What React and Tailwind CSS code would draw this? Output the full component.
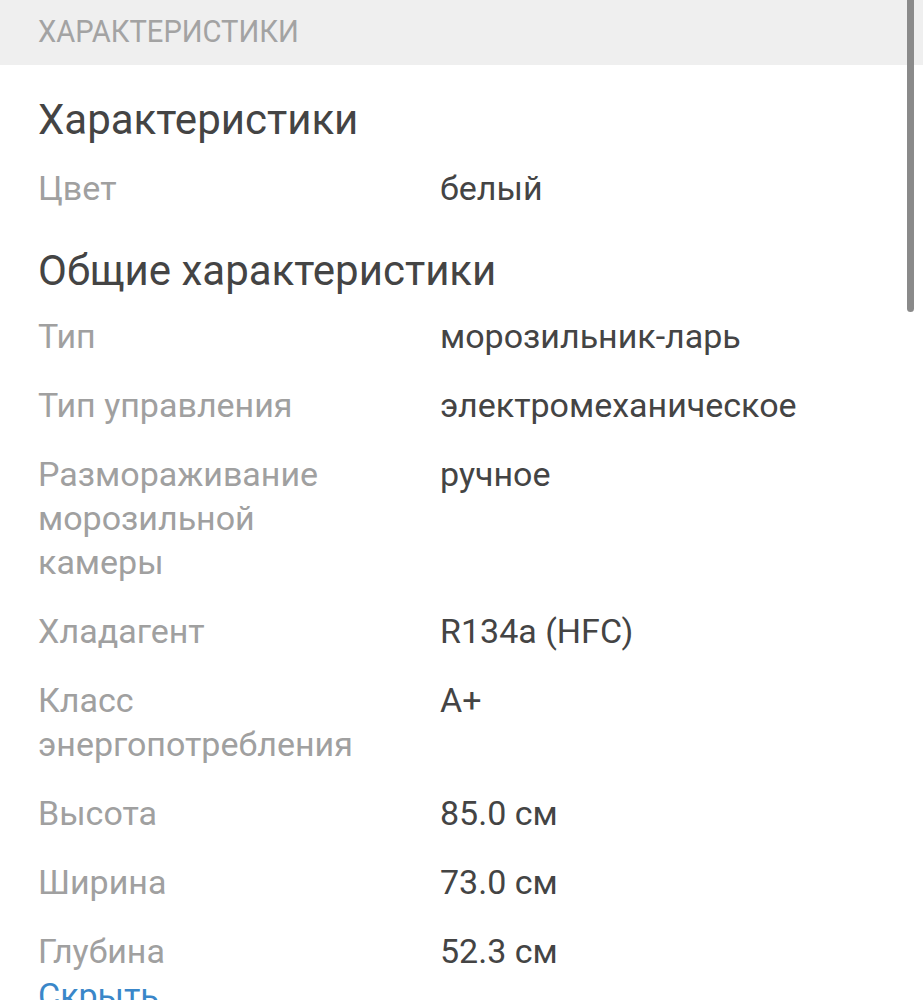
const specs = [
  {
    title: 'Характеристики',
    rows: [['Цвет', 'белый']],
  },
  {
    title: 'Общие характеристики',
    rows: [
      ['Тип', 'морозильник-ларь'],
      ['Тип управления', 'электромеханическое'],
      ['Размораживание морозильной камеры', 'ручное'],
      ['Хладагент', 'R134a (HFC)'],
      ['Класс энергопотребления', 'A+'],
      ['Высота', '85.0 см'],
      ['Ширина', '73.0 см'],
      ['Глубина', '52.3 см'],
    ],
  },
];

const App = () => {
  return (
    <div className="relative h-[1000px] overflow-hidden bg-white font-['Roboto',sans-serif]">
      <div className="h-[65px] bg-[#efefef] pl-[38px] flex items-center">
        <span className="text-[31px] text-[#a3a3a3] origin-left scale-x-[0.94] inline-block">ХАРАКТЕРИСТИКИ</span>
      </div>

      <div className="pl-[38px] pt-[31px]">
        {specs.map((group, gi) => (
          <div key={group.title}>
            <div className={`text-[42px] leading-[48px] text-[#444444] ${gi > 0 ? 'mt-[12px] mb-[19px]' : 'mb-[22px]'}`}>{group.title}</div>
            {group.rows.map(([label, value], ri) => (
              <div key={label} className={`grid grid-cols-[402px_1fr] text-[34px] leading-[44px] ${ri === group.rows.length - 1 && gi === specs.length - 1 ? '' : 'pb-[25px]'}`}>
                <div className="text-[#a0a0a0] pr-[70px]">{label}</div>
                <div className="text-[#444444]">{value}</div>
              </div>
            ))}
          </div>
        ))}
        <div className="text-[34px] leading-[44px] text-[#3a87c9]">Скрыть</div>
      </div>

      <div className="absolute right-[9px] top-0 w-[7px] h-[312px] rounded-b-full bg-[#8a8a8a]" />
    </div>
  );
};

export default App;
